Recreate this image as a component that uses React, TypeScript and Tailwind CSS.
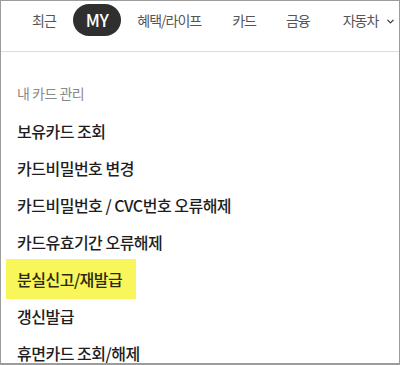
import { ChevronDown } from "lucide-react";

const tabs = [
    { label: "최근", ml: "ml-0" },
    { label: "MY", ml: "ml-[17px]", active: true },
    { label: "혜택/라이프", ml: "ml-[16px]" },
    { label: "카드", ml: "ml-[31px]" },
    { label: "금융", ml: "ml-[30px]" },
    { label: "자동차", ml: "ml-[33px]" },
];

const items = [
    "보유카드 조회",
    "카드비밀번호 변경",
    "카드비밀번호 / CVC번호 오류해제",
    "카드유효기간 오류해제",
    "분실신고/재발급",
    "갱신발급",
    "휴면카드 조회/해제",
];

export default function App() {
    return (
        <div
            className="w-[400px] h-[365px] overflow-hidden bg-white border border-[#9c9c9c] border-b-2"
            style={{ fontFamily: '"Noto Sans CJK KR", "Noto Sans", sans-serif' }}
        >
            {/* Top tabs */}
            <div className="relative h-[51px] border-b border-[#dcdcdc] flex items-start pt-[3px] pl-[31px] overflow-hidden">
                {tabs.map((t) =>
                    t.active ? (
                        <span
                            key={t.label}
                            className={`${t.ml} shrink-0 h-[32px] px-[13px] rounded-full bg-[#2f2f2f] text-white text-[17px] font-medium flex items-center tracking-[-0.5px]`}
                        >
                            {t.label}
                        </span>
                    ) : (
                        <span
                            key={t.label}
                            className={`${t.ml} shrink-0 h-[32px] flex items-center text-[14px] text-[#555] tracking-[-1px]`}
                        >
                            {t.label}
                        </span>
                    )
                )}
                <div className="absolute right-0 top-0 h-[40px] w-[14px] flex items-center justify-start bg-gradient-to-r from-white/60 to-white">
                    <ChevronDown size={11} strokeWidth={2.5} className="text-[#333]" />
                </div>
            </div>

            {/* My card menu */}
            <div className="pt-[23px] pl-[16px]">
                <div className="h-[37px] flex items-center text-[14px] text-[#8a8a8a] tracking-[-0.5px]">
                    내 카드 관리
                </div>
                {items.map((item) =>
                    item === "분실신고/재발급" ? (
                        <div key={item} className="h-[37px] flex items-center">
                            <span className="-ml-[11px] pl-[11px] w-[130px] h-[40px] flex items-center bg-[#f8f65a] text-[16px] font-medium text-[#2a2a14] tracking-[-0.5px]">
                                {item}
                            </span>
                        </div>
                    ) : (
                        <div key={item} className="h-[37px] flex items-center text-[16px] font-medium text-[#1e1e1e] tracking-[-0.5px]">
                            {item}
                        </div>
                    )
                )}
            </div>
        </div>
    );
}
